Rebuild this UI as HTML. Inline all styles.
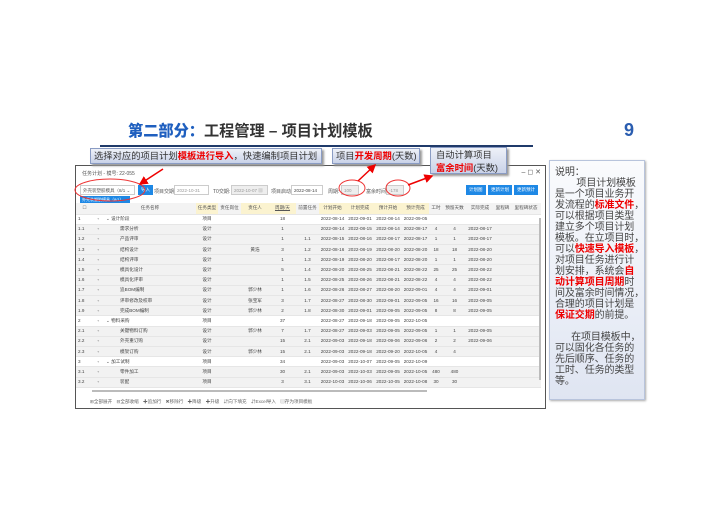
<!DOCTYPE html>
<html><head><meta charset="utf-8"><style>
*{margin:0;padding:0;box-sizing:border-box}
body{width:704px;height:528px;background:#fff;position:relative;overflow:hidden;font-family:"Liberation Sans","Noto Sans CJK SC",sans-serif}
.abs{position:absolute}
.title{left:128px;top:123px;font-size:15.2px;line-height:17px;font-weight:bold;color:#333;white-space:nowrap}
.title b{color:#1f5fbf}
.nine{left:624px;top:120px;font-size:18px;font-weight:bold;color:#2a5db0}
.hr{left:100px;top:145px;width:433px;height:2px;background:#1f3a6a}
.call{z-index:5;background:linear-gradient(#eef1f8,#c9d2e8);border:1px solid #8a9cc4;box-shadow:2px 2px 2px #999;font-size:9.3px;color:#333;white-space:nowrap;padding:1px 3px;line-height:12.5px;overflow:hidden}
.call r{color:#e00;font-weight:bold}
.win{left:75px;top:165px;width:471px;height:244px;border:1px solid #555;background:#fff;font-size:5px;color:#555}
.side{left:549px;top:160px;width:96px;height:240px;border:1px solid #b8c4dc;background:linear-gradient(#fafbfd,#dfe5f2);box-shadow:1px 1px 2px #aaa;font-size:10px;line-height:11px;color:#444;padding:6px 2px 4px 5px;white-space:nowrap;letter-spacing:-0.1px}
.side r{color:#e00;font-weight:bold}
table{border-collapse:collapse;position:absolute;left:0;top:37px;width:465px;table-layout:fixed}
tr{height:10.2px}
td{height:10.2px;line-height:8px;padding:0;font-size:4.6px;white-space:nowrap;overflow:hidden;border-bottom:1px solid #e6e6e6;text-align:center;color:#444}
tr.h,tr.h td{height:11px}
tr.h td{background:#f3f3f3;color:#555}
tr.h td.y{background:#fbf3d0}
tr.g td{background:#f2f2f2}
td.l{text-align:left;padding-left:2px}
.btn{background:#1e88e5;color:#fff;font-size:4.5px;padding:2px 3px;position:absolute}
.inp{position:absolute;border:1px solid #ccc;height:10px;font-size:4.5px;padding:2px;color:#999;background:#fff}
</style></head><body>
<div class="abs title"><b>第二部分：</b>工程管理 – 项目计划模板</div>
<div class="abs nine">9</div>
<div class="abs hr"></div>
<div class="abs call" style="left:90px;top:148px;width:232px;height:16px">选择对应的项目计划<r>模板进行导入</r>，快速编制项目计划</div>
<div class="abs call" style="left:332px;top:148px;width:88px;height:16px">项目<r>开发周期</r>(天数)</div>
<div class="abs call" style="left:430px;top:147px;width:77px;height:27px;white-space:normal;padding-left:5px">自动计算项目<br><r>富余时间</r>(天数)</div>

<div class="abs win">
 <div class="abs" style="left:6px;top:4px;font-size:5px">任务计划 - 模号: 22-055</div>
 <div class="abs" style="right:4px;top:2px;font-size:7px;color:#555">– ◻ ✕</div>
 <div class="inp" style="left:4px;top:19px;width:55px;color:#555">外壳装塑胶模具（8/1 ⌄</div>
 <div class="abs" style="left:4px;top:30px;width:50px;height:7px;background:#1e88e5;color:#fff;font-size:4px;padding:1px 2px">外壳装塑胶模具（8/1）</div>
 <div class="btn" style="left:62px;top:19px">导入</div>
 <div class="abs" style="left:78px;top:22px">项目交期:</div>
 <div class="inp" style="left:98px;top:19px;width:35px">2022-10-31</div>
 <div class="abs" style="left:137px;top:22px">T0交期:</div>
 <div class="inp" style="left:155px;top:19px;width:37px;background:#eee">2022-10-07 ▦</div>
 <div class="abs" style="left:195px;top:22px">项目启动:</div>
 <div class="inp" style="left:215px;top:19px;width:32px;color:#444">2022-08-14</div>
 <div class="abs" style="left:252px;top:22px">周期:</div>
 <div class="inp" style="left:265px;top:19px;width:18px;background:#eee">100</div>
 <div class="abs" style="left:290px;top:22px">富余时间:</div>
 <div class="inp" style="left:310px;top:19px;width:18px;background:#eee">-178</div>
 <div class="btn" style="left:390px;top:19px">计划图</div>
 <div class="btn" style="left:412px;top:19px">更新计划</div>
 <div class="btn" style="left:438px;top:19px">更新预计</div>
 <table>
 <colgroup><col style="width:17px"><col style="width:11px"><col style="width:92px"><col style="width:22px"><col style="width:23px"><col style="width:28px"><col style="width:27px"><col style="width:23px"><col style="width:27px"><col style="width:28px"><col style="width:28px"><col style="width:27px"><col style="width:14px"><col style="width:23px"><col style="width:28px"><col style="width:17px"><col style="width:30px"></colgroup>
 <tr class="h"><td>☐</td><td></td><td>任务名称</td><td class="y">任务类型</td><td>责任岗位</td><td class="y">责任人</td><td class="y"><u>周期/天</u></td><td>前置任务</td><td class="y">计划开始</td><td class="y">计划完成</td><td class="y">预计开始</td><td class="y">预计完成</td><td>工时</td><td>预留天数</td><td>实际完成</td><td>里程碑</td><td>里程碑状态</td></tr>
 <tr><td class="l">1</td><td>▫</td><td class="l">⌄ 设计阶段</td><td>项目</td><td></td><td></td><td>18</td><td></td><td>2022-08-14</td><td>2022-09-01</td><td>2022-08-14</td><td>2022-09-05</td><td></td><td></td><td></td><td></td><td></td></tr>
 <tr class="g"><td class="l">1.1</td><td>▫</td><td class="l">&nbsp;&nbsp;&nbsp;&nbsp;&nbsp;&nbsp;&nbsp;&nbsp;&nbsp;&nbsp;&nbsp;需求分析</td><td>设计</td><td></td><td></td><td>1</td><td></td><td>2022-08-14</td><td>2022-08-15</td><td>2022-08-14</td><td>2022-08-17</td><td>4</td><td>4</td><td>2022-08-17</td><td></td><td></td></tr>
 <tr class="g"><td class="l">1.2</td><td>▫</td><td class="l">&nbsp;&nbsp;&nbsp;&nbsp;&nbsp;&nbsp;&nbsp;&nbsp;&nbsp;&nbsp;&nbsp;产品评审</td><td>设计</td><td></td><td></td><td>1</td><td>1.1</td><td>2022-08-15</td><td>2022-08-16</td><td>2022-08-17</td><td>2022-08-17</td><td>1</td><td>1</td><td>2022-08-17</td><td></td><td></td></tr>
 <tr class="g"><td class="l">1.3</td><td>▫</td><td class="l">&nbsp;&nbsp;&nbsp;&nbsp;&nbsp;&nbsp;&nbsp;&nbsp;&nbsp;&nbsp;&nbsp;结构设计</td><td>设计</td><td></td><td>黄浩</td><td>3</td><td>1.2</td><td>2022-08-16</td><td>2022-08-19</td><td>2022-08-20</td><td>2022-08-20</td><td>18</td><td>18</td><td>2022-08-20</td><td></td><td></td></tr>
 <tr class="g"><td class="l">1.4</td><td>▫</td><td class="l">&nbsp;&nbsp;&nbsp;&nbsp;&nbsp;&nbsp;&nbsp;&nbsp;&nbsp;&nbsp;&nbsp;结构评审</td><td>设计</td><td></td><td></td><td>1</td><td>1.3</td><td>2022-08-19</td><td>2022-08-20</td><td>2022-08-17</td><td>2022-08-20</td><td>1</td><td>1</td><td>2022-08-20</td><td></td><td></td></tr>
 <tr class="g"><td class="l">1.5</td><td>▫</td><td class="l">&nbsp;&nbsp;&nbsp;&nbsp;&nbsp;&nbsp;&nbsp;&nbsp;&nbsp;&nbsp;&nbsp;模具化设计</td><td>设计</td><td></td><td></td><td>5</td><td>1.4</td><td>2022-08-20</td><td>2022-08-25</td><td>2022-08-21</td><td>2022-08-22</td><td>25</td><td>25</td><td>2022-08-22</td><td></td><td></td></tr>
 <tr class="g"><td class="l">1.6</td><td>▫</td><td class="l">&nbsp;&nbsp;&nbsp;&nbsp;&nbsp;&nbsp;&nbsp;&nbsp;&nbsp;&nbsp;&nbsp;模具化评审</td><td>设计</td><td></td><td></td><td>1</td><td>1.5</td><td>2022-08-25</td><td>2022-08-26</td><td>2022-08-21</td><td>2022-08-22</td><td>4</td><td>4</td><td>2022-08-22</td><td></td><td></td></tr>
 <tr class="g"><td class="l">1.7</td><td>▫</td><td class="l">&nbsp;&nbsp;&nbsp;&nbsp;&nbsp;&nbsp;&nbsp;&nbsp;&nbsp;&nbsp;&nbsp;追BOM编制</td><td>设计</td><td></td><td>郭少林</td><td>1</td><td>1.6</td><td>2022-08-26</td><td>2022-08-27</td><td>2022-08-20</td><td>2022-09-01</td><td>4</td><td>4</td><td>2022-09-01</td><td></td><td></td></tr>
 <tr class="g"><td class="l">1.8</td><td>▫</td><td class="l">&nbsp;&nbsp;&nbsp;&nbsp;&nbsp;&nbsp;&nbsp;&nbsp;&nbsp;&nbsp;&nbsp;评审修改及校审</td><td>设计</td><td></td><td>张宝军</td><td>3</td><td>1.7</td><td>2022-08-27</td><td>2022-08-30</td><td>2022-09-01</td><td>2022-09-05</td><td>16</td><td>16</td><td>2022-09-05</td><td></td><td></td></tr>
 <tr class="g"><td class="l">1.9</td><td>▫</td><td class="l">&nbsp;&nbsp;&nbsp;&nbsp;&nbsp;&nbsp;&nbsp;&nbsp;&nbsp;&nbsp;&nbsp;完成BOM编制</td><td>设计</td><td></td><td>郭少林</td><td>2</td><td>1.8</td><td>2022-08-30</td><td>2022-09-01</td><td>2022-09-05</td><td>2022-09-05</td><td>8</td><td>8</td><td>2022-09-05</td><td></td><td></td></tr>
 <tr><td class="l">2</td><td>▫</td><td class="l">⌄ 物料采购</td><td>项目</td><td></td><td></td><td>37</td><td></td><td>2022-08-27</td><td>2022-09-18</td><td>2022-09-05</td><td>2022-10-05</td><td></td><td></td><td></td><td></td><td></td></tr>
 <tr class="g"><td class="l">2.1</td><td>▫</td><td class="l">&nbsp;&nbsp;&nbsp;&nbsp;&nbsp;&nbsp;&nbsp;&nbsp;&nbsp;&nbsp;&nbsp;关键物料订购</td><td>设计</td><td></td><td>郭少林</td><td>7</td><td>1.7</td><td>2022-08-27</td><td>2022-09-03</td><td>2022-09-05</td><td>2022-09-05</td><td>1</td><td>1</td><td>2022-09-05</td><td></td><td></td></tr>
 <tr class="g"><td class="l">2.2</td><td>▫</td><td class="l">&nbsp;&nbsp;&nbsp;&nbsp;&nbsp;&nbsp;&nbsp;&nbsp;&nbsp;&nbsp;&nbsp;外壳重订购</td><td>设计</td><td></td><td></td><td>15</td><td>2.1</td><td>2022-09-03</td><td>2022-09-18</td><td>2022-09-06</td><td>2022-09-06</td><td>2</td><td>2</td><td>2022-09-06</td><td></td><td></td></tr>
 <tr class="g"><td class="l">2.3</td><td>▫</td><td class="l">&nbsp;&nbsp;&nbsp;&nbsp;&nbsp;&nbsp;&nbsp;&nbsp;&nbsp;&nbsp;&nbsp;模架订购</td><td>设计</td><td></td><td>郭少林</td><td>15</td><td>2.1</td><td>2022-09-03</td><td>2022-09-18</td><td>2022-09-20</td><td>2022-10-05</td><td>4</td><td>4</td><td></td><td></td><td></td></tr>
 <tr><td class="l">3</td><td>▫</td><td class="l">⌄ 加工试制</td><td>项目</td><td></td><td></td><td>34</td><td></td><td>2022-09-03</td><td>2022-10-07</td><td>2022-09-05</td><td>2022-10-09</td><td></td><td></td><td></td><td></td><td></td></tr>
 <tr class="g"><td class="l">3.1</td><td>▫</td><td class="l">&nbsp;&nbsp;&nbsp;&nbsp;&nbsp;&nbsp;&nbsp;&nbsp;&nbsp;&nbsp;&nbsp;零件加工</td><td>项目</td><td></td><td></td><td>30</td><td>2.1</td><td>2022-09-03</td><td>2022-10-03</td><td>2022-09-05</td><td>2022-10-05</td><td>480</td><td>480</td><td></td><td></td><td></td></tr>
 <tr class="g"><td class="l">3.2</td><td>▫</td><td class="l">&nbsp;&nbsp;&nbsp;&nbsp;&nbsp;&nbsp;&nbsp;&nbsp;&nbsp;&nbsp;&nbsp;装配</td><td>项目</td><td></td><td></td><td>3</td><td>3.1</td><td>2022-10-03</td><td>2022-10-06</td><td>2022-10-05</td><td>2022-10-08</td><td>30</td><td>30</td><td></td><td></td><td></td></tr>
 </table>
 <div class="abs" style="left:463px;top:52px;width:2px;height:162px;background:#bbb"></div>
 <div class="abs" style="left:16px;top:224px;width:335px;height:2px;background:#bbb"></div>
 <div class="abs" style="left:14px;top:233px;font-size:4.6px;color:#666;word-spacing:3px;white-space:nowrap">⊞全部展开 ⊟全部收缩 ✚追加行 ✖移除行 ✚降级 ✚升级 ⇵向下填充 ⇵Excel导入 ▤存为项目模板</div>
</div>

<div class="abs side">说明：<br>&nbsp;&nbsp;&nbsp;&nbsp;&nbsp;&nbsp;&nbsp;&nbsp;项目计划模板<br>是一个项目业务开<br>发流程的<r>标准文件</r>，<br>可以根据项目类型<br>建立多个项目计划<br>模板。在立项目时，<br>可以<r>快速导入模板</r>，<br>对项目任务进行计<br>划安排，系统会<r>自</r><br><r>动计算项目周期</r>时<br>间及富余时间情况，<br>合理的项目计划是<br><r>保证交期</r>的前提。<br><br>&nbsp;&nbsp;&nbsp;&nbsp;&nbsp;&nbsp;在项目模板中，<br>可以固化各任务的<br>先后顺序、任务的<br>工时、任务的类型<br>等。</div>

<svg class="abs" style="left:0;top:0;z-index:6" width="704" height="528">
<defs><marker id="a" markerWidth="6" markerHeight="6" refX="5" refY="3" orient="auto"><path d="M0,0 L6,3 L0,6 z" fill="#e00"/></marker></defs>
<g fill="none" stroke="#e33" stroke-width="1">
<ellipse cx="110" cy="190" rx="35" ry="11"/>
<ellipse cx="352" cy="188" rx="13" ry="8"/>
<ellipse cx="398" cy="188" rx="12" ry="8"/>
</g>
<g stroke="#e00" stroke-width="1.5" fill="none" marker-end="url(#a)">
<line x1="163" y1="169" x2="140" y2="184"/>
<line x1="358" y1="181" x2="375" y2="165"/>
<line x1="408" y1="185" x2="432" y2="176"/>
</g>
</svg>
</body></html>
